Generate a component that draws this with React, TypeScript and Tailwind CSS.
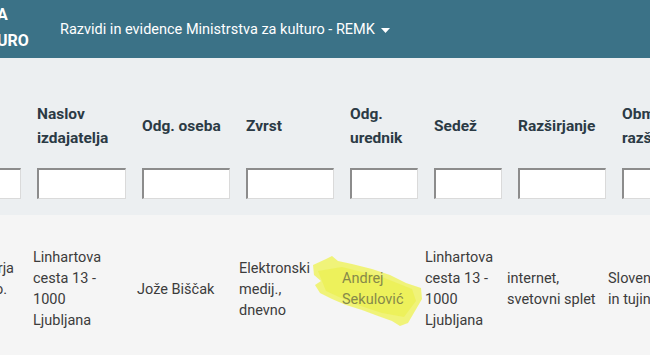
const font = { fontFamily: "Roboto, 'Liberation Sans', sans-serif" };

type Head = { label: string[]; width: number };

const heads: Head[] = [
  { label: ["Naslov", "izdajatelja"], width: 89 },
  { label: ["Odg. oseba"], width: 88 },
  { label: ["Zvrst"], width: 88 },
  { label: ["Odg.", "urednik"], width: 68 },
  { label: ["Sedež"], width: 68 },
  { label: ["Razširjanje"], width: 88 },
  { label: ["Območje", "razširjanja"], width: 88 },
];

type Cell = { lines: string[]; width: number; mark?: boolean };

const cells: Cell[] = [
  { lines: ["Linhartova", "cesta 13 -", "1000", "Ljubljana"], width: 88 },
  { lines: ["Jože Biščak"], width: 86 },
  { lines: ["Elektronski", "medij.,", "dnevno"], width: 87 },
  { lines: ["Andrej", "Sekulović"], width: 67, mark: true },
  { lines: ["Linhartova", "cesta 13 -", "1000", "Ljubljana"], width: 66 },
  { lines: ["internet,", "svetovni splet"], width: 85 },
  { lines: ["Slovenija", "in tujina"], width: 90 },
];

function FilterInput() {
  return (
    <div className="h-[31px] w-full bg-white border-t-2 border-l-2 border-r border-b border-t-[#8c8c8c] border-l-[#8c8c8c] border-r-[#dadada] border-b-[#dadada]" />
  );
}

function Highlight() {
  return (
    <svg
      className="absolute left-[-30px] top-[-13px] pointer-events-none"
      width="112"
      height="72"
      viewBox="0 0 112 72"
    >
      <path
        d="M1,10 L14,4 L20,1 L26,6 L40,9 L60,14 L78,20 L94,28 L109,33 L110,44 L103,56 L96,68 L88,71 L80,66 L66,61 L50,55 L34,50 L20,44 L8,38 L3,30 L9,26 L2,20 Z"
        fill="#eff36b"
        opacity="0.9"
      />
      <path
        d="M6,16 L30,12 L70,22 L100,34 L104,46 L92,62 L70,58 L40,48 L14,36 Z"
        fill="#ebf04f"
        opacity="0.7"
      />
    </svg>
  );
}

export default function App() {
  return (
    <div className="w-[650px] h-[355px] overflow-hidden bg-[#f5f5f5]" style={font}>
      <div className="h-[58px] bg-[#3b7287] flex items-center text-white">
        <div className="ml-[-3px] w-[63px] text-[16px] font-bold leading-[26px] whitespace-nowrap pb-[2px]">
          <div>A</div>
          <div>URO</div>
        </div>
        <div className="flex items-center gap-[6px] text-[14.5px] pt-[1px]">
          <span>Razvidi in evidence Ministrstva za kulturo - REMK</span>
          <svg width="9" height="5" viewBox="0 0 9 5" className="mt-[1px]">
            <path d="M0,0 L9,0 L4.5,5 Z" fill="#ffffff" />
          </svg>
        </div>
      </div>

      <div className="bg-[#eceff1] pt-[44px] pb-[16px]">
        <div className="flex gap-4 ml-[-67px] whitespace-nowrap">
          <div className="w-[88px] shrink-0">
            <div className="h-[48px] flex items-center text-[15.5px] font-bold leading-[24px] text-[#2b3a45]">
              Izdajatelj
            </div>
            <div className="mt-[18px]">
              <FilterInput />
            </div>
          </div>
          {heads.map((h) => (
            <div key={h.label.join(" ")} className="shrink-0" style={{ width: h.width }}>
              <div className="h-[48px] flex flex-col justify-center text-[15.5px] font-bold leading-[24px] text-[#2b3a45]">
                {h.label.map((l) => (
                  <div key={l}>{l}</div>
                ))}
              </div>
              <div className="mt-[18px]">
                <FilterInput />
              </div>
            </div>
          ))}
        </div>
      </div>

      <div className="pt-[32px] flex items-center gap-4 ml-[-71px] whitespace-nowrap text-[14.5px] leading-[21px] text-[#3c3c3c]">
        <div className="w-[88px] shrink-0 text-right">
          <div className="pr-[3px]">Nova obzorja</div>
          <div className="pr-[10px]">d.o.o.</div>
          <div className="pr-[60px]">Lj.</div>
        </div>
        {cells.map((c, i) => (
          <div key={i} className="shrink-0 relative" style={{ width: c.width }}>
            {c.mark && <Highlight />}
            <div className={c.mark ? "relative text-[#86894a]" : ""}>
              {c.lines.map((l) => (
                <div key={l}>{l}</div>
              ))}
            </div>
          </div>
        ))}
      </div>
    </div>
  );
}
